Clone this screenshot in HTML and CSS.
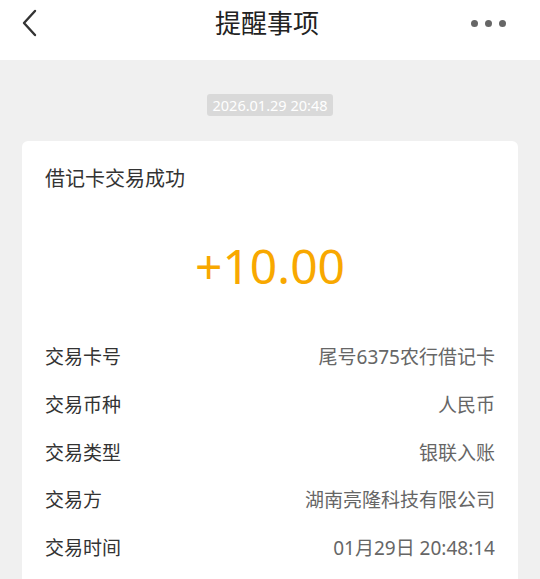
FILE: index.html
```html
<html lang="zh-CN">
  <head>
    <meta charset="UTF-8">
    <meta name="viewport" content="width=device-width, initial-scale=1.0">
    <title>提醒事项</title>
    <link rel="stylesheet" href="styles.css">
  </head>
  <body>
  <div class="nav-bar">
    <svg class="back-icon" width="20" height="28" viewBox="0 0 20 28">
      <path d="M15 2 L4 14 L15 26" fill="none" stroke="#333" stroke-width="2.4" stroke-linecap="round" stroke-linejoin="round"/>
    </svg>
    <div class="nav-title">提醒事项</div>
    <div class="more-dots">
      <span></span><span></span><span></span>
    </div>
  </div>

  <div class="content">
    <div class="time-pill">2026.01.29 20:48</div>

    <div class="card">
      <div class="card-title">借记卡交易成功</div>
      <div class="amount">+10.00</div>

      <div class="rows">
        <div class="row"><span class="label">交易卡号</span><span class="value">尾号6375农行借记卡</span></div>
        <div class="row"><span class="label">交易币种</span><span class="value">人民币</span></div>
        <div class="row"><span class="label">交易类型</span><span class="value">银联入账</span></div>
        <div class="row"><span class="label">交易方</span><span class="value">湖南亮隆科技有限公司</span></div>
        <div class="row"><span class="label">交易时间</span><span class="value">01月29日 20:48:14</span></div>
      </div>
    </div>
  </div>
</body>
</html>
```

FILE: styles.css
```css
body {
  margin: 0;
  background: #f0f0f0;
  font-family: "Noto Sans", "Noto Sans CJK SC", sans-serif;
  overflow: hidden;
}

.nav-bar {
  height: 60px;
  background: #fff;
  display: flex;
  align-items: center;
  justify-content: space-between;
  padding: 0 34px 0 20px;
  position: relative;
}

.back-icon {
  margin-top: -14px;
}

.nav-title {
  position: absolute;
  left: 0;
  right: 6px;
  top: 3px;
  text-align: center;
  font-size: 26px;
  color: #222;
  pointer-events: none;
}

.more-dots {
  display: flex;
  gap: 7px;
  margin-top: -14px;
}

.more-dots span {
  width: 7px;
  height: 7px;
  border-radius: 50%;
  background: #666;
}

.content {
  padding: 34px 22px 0;
  display: flex;
  flex-direction: column;
  align-items: center;
}

.time-pill {
  background: #d9d9d9;
  color: #fff;
  font-size: 14.5px;
  line-height: 22px;
  padding: 0 6px;
  border-radius: 3px;
}

.card {
  align-self: stretch;
  margin-top: 25px;
  background: #fff;
  border-radius: 6px;
  padding: 24px 23px 20px;
  height: 600px;
}

.card-title {
  font-size: 20px;
  color: #333;
  line-height: 28px;
}

.amount {
  text-align: center;
  color: #f8a800;
  font-size: 48px;
  line-height: 60px;
  margin-top: 43px;
}

.rows {
  margin-top: 38px;
}

.row {
  display: flex;
  justify-content: space-between;
  font-size: 19px;
  line-height: 47.75px;
}

.label {
  color: #333;
}

.value {
  color: #666;
}
```
